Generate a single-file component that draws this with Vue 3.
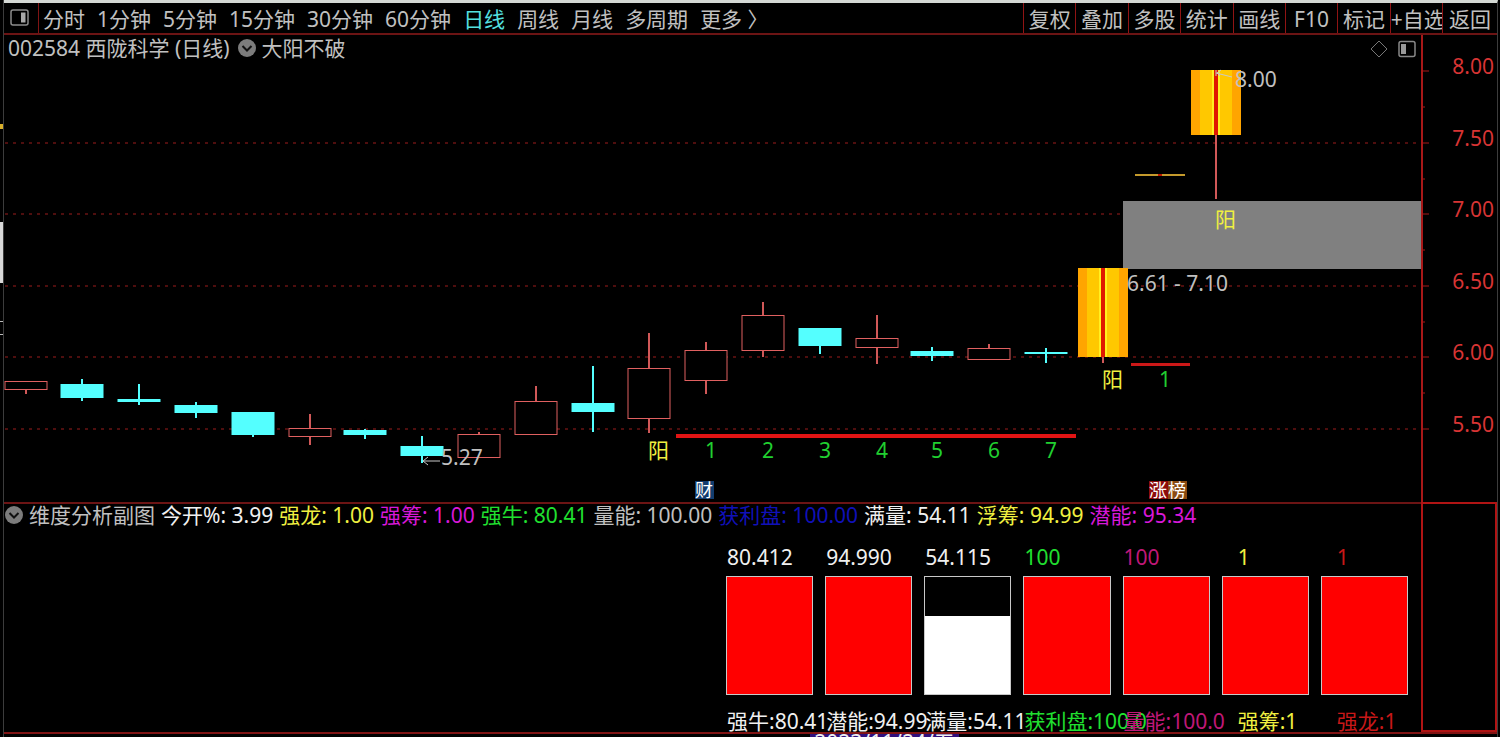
<template>
  <div class="terminal">
    <aside class="edge">
      <i class="edge-mark gold"></i>
      <i class="edge-mark thumb"></i>
      <i class="edge-mark dots"></i>
    </aside>

    <div class="window">
      <header class="toolbar">
        <button class="panel-btn" aria-label="侧栏">
          <svg width="20" height="18" viewBox="0 0 20 18" fill="none">
            <rect x="1" y="1" width="17" height="15" rx="2" stroke="#8c8c8c" stroke-width="1.5" />
            <rect x="11" y="3.5" width="4.5" height="10" fill="#a8a8a8" />
          </svg>
        </button>
        <nav class="periods">
          <button v-for="p in periods" :key="p" :class="{ active: p === current }" @click="current = p">{{ p }}</button>
        </nav>
        <nav class="tools">
          <button v-for="t in tools" :key="t">{{ t }}</button>
        </nav>
      </header>

      <section class="main-chart">
        <div class="chart-title">
          <span>002584 西陇科学 (日线)</span>
          <svg class="chevron" width="20" height="20" viewBox="0 0 20 20">
            <circle cx="10" cy="10" r="9" fill="#7c7c7c" />
            <path d="M5.5 8L10 12.5L14.5 8" fill="none" stroke="#111" stroke-width="2" />
          </svg>
          <span>大阳不破</span>
        </div>

        <svg class="kline" viewBox="4 35 1493 467">
          <!-- 网格与价格轴 -->
          <g v-for="t in majorTicks" :key="t.label">
            <line v-if="t.grid" x1="5" :y1="t.y" x2="1421" :y2="t.y" class="grid" />
            <line x1="1421" :y1="t.y" x2="1429" :y2="t.y" class="axis" />
            <text x="1494" :y="t.y + 3" class="price">{{ t.label }}</text>
          </g>
          <line v-for="y in minorTicks" :key="y" x1="1421" :y1="y" x2="1425" :y2="y" class="axis" />
          <line x1="1422" y1="35" x2="1422" y2="502" class="axis bold" />

          <!-- 缺口区间 -->
          <rect x="1123" y="201" width="298" height="68" fill="#808080" />

          <g v-for="c in candles" :key="c.x">
            <line :x1="c.x" :y1="c.high" :x2="c.x" :y2="c.top" :class="['wick', c.dir]" />
            <line :x1="c.x" :y1="c.bottom" :x2="c.x" :y2="c.low" :class="['wick', c.dir]" />
            <rect v-if="c.dir === 'up'" :x="c.x - 21" :y="c.top + 0.5" width="42" :height="c.bottom - c.top - 1" class="body-up" />
            <rect v-else :x="c.x - 21.5" :y="c.top" width="43" :height="c.bottom - c.top" class="body-down" />
          </g>

          <!-- 大阳线 -->
          <g v-for="b in bigCandles" :key="b.x">
            <rect :x="b.x" :y="b.y" width="50" :height="b.h" fill="#ffa500" />
            <rect :x="b.x + 9" :y="b.y" width="32" :height="b.h" fill="#ffc800" />
            <rect :x="b.x + 21" :y="b.y" width="8" :height="b.h" fill="#fff020" />
            <rect :x="b.x + 23" :y="b.y" width="4" :height="b.h" fill="#e01800" />
            <line :x1="b.x + 25" :y1="b.y + b.h" :x2="b.x + 25" :y2="b.low" class="wick up" />
          </g>
          <rect x="1135" y="174" width="50" height="2" fill="#c49a2c" />
          <rect x="1158" y="174" width="4" height="2" fill="#c01800" />

          <rect x="676" y="434" width="400" height="4" fill="#e01414" />
          <rect x="1131" y="363" width="59" height="3" fill="#cc1818" />

          <text v-for="m in marks" :key="m.x" :x="m.x" :y="m.y" :class="['mark', m.kind]">{{ m.text }}</text>

          <path d="M440 461H423M428 457L423 461L428 465" class="arrow" />
          <text x="441" y="465" class="note">5.27</text>
          <path d="M1216 73L1232 77M1216 70V76M1221 70L1217 73L1220 76" class="arrow" />
          <text x="1235" y="87" class="note">8.00</text>
          <text x="1127" y="291" class="note">6.61 - 7.10</text>

          <g v-for="b in badges" :key="b.text">
            <rect :x="b.x" y="481" width="19" height="18" :fill="b.bg" />
            <text :x="b.x" y="497" class="badge">{{ b.text }}</text>
          </g>

          <path d="M1379 41L1387 49L1379 57L1371 49Z" fill="none" stroke="#777" />
          <rect x="1399" y="41.5" width="16" height="15" rx="2" fill="none" stroke="#888" stroke-width="1.5" />
          <rect x="1401" y="44" width="5" height="10" fill="#999" />
        </svg>
      </section>

      <section class="sub-chart">
        <div class="sub-body">
          <div class="legend">
            <svg class="chevron" width="20" height="20" viewBox="0 0 20 20">
              <circle cx="10" cy="10" r="9" fill="#7c7c7c" />
              <path d="M5.5 8L10 12.5L14.5 8" fill="none" stroke="#111" stroke-width="2" />
            </svg>
            <span class="name">维度分析副图</span>
            <span v-for="l in legend" :key="l.text" :class="l.color">{{ l.text }}</span>
          </div>
          <div class="bars">
            <div v-for="b in bars" :key="b.label" :class="['bar', b.color, { inset: b.inset }]">
              <span class="value">{{ b.value }}</span>
              <div class="box">
                <div class="fill" :class="{ white: b.fill < 100 }" :style="{ height: b.fill + '%' }"></div>
              </div>
              <span class="label">{{ b.label }}</span>
            </div>
          </div>
        </div>
        <div class="side-box"></div>
      </section>

      <footer class="date-row"><span class="date">2023/11/24/五</span></footer>
    </div>
  </div>
</template>

<script setup>
import { ref } from 'vue';

const periods = ['分时', '1分钟', '5分钟', '15分钟', '30分钟', '60分钟', '日线', '周线', '月线', '多周期', '更多 〉'];
const tools = ['复权', '叠加', '多股', '统计', '画线', 'F10', '标记', '+自选', '返回'];
const current = ref('日线');

const majorTicks = [
  { label: '8.00', y: 71 },
  { label: '7.50', y: 143, grid: true },
  { label: '7.00', y: 214, grid: true },
  { label: '6.50', y: 286, grid: true },
  { label: '6.00', y: 357, grid: true },
  { label: '5.50', y: 429, grid: true }
];
const minorTicks = [107, 179, 250, 322, 393];

// x 为中线，top / bottom 为实体上下沿，high / low 为影线端点
const candles = [
  { x: 26, high: 381, top: 381, bottom: 390, low: 394, dir: 'up' },
  { x: 82, high: 379, top: 384, bottom: 398, low: 401, dir: 'down' },
  { x: 139, high: 384, top: 399, bottom: 402, low: 405, dir: 'down' },
  { x: 196, high: 402, top: 405, bottom: 413, low: 418, dir: 'down' },
  { x: 253, high: 412, top: 412, bottom: 435, low: 437, dir: 'down' },
  { x: 310, high: 414, top: 428, bottom: 437, low: 445, dir: 'up' },
  { x: 365, high: 429, top: 430, bottom: 435, low: 439, dir: 'down' },
  { x: 422, high: 436, top: 446, bottom: 456, low: 463, dir: 'down' },
  { x: 479, high: 432, top: 434, bottom: 458, low: 458, dir: 'up' },
  { x: 536, high: 386, top: 401, bottom: 435, low: 435, dir: 'up' },
  { x: 593, high: 366, top: 403, bottom: 412, low: 432, dir: 'down' },
  { x: 649, high: 333, top: 368, bottom: 419, low: 433, dir: 'up' },
  { x: 706, high: 342, top: 350, bottom: 381, low: 394, dir: 'up' },
  { x: 763, high: 302, top: 315, bottom: 351, low: 357, dir: 'up' },
  { x: 820, high: 328, top: 328, bottom: 346, low: 354, dir: 'down' },
  { x: 877, high: 315, top: 338, bottom: 348, low: 364, dir: 'up' },
  { x: 932, high: 347, top: 351, bottom: 356, low: 361, dir: 'down' },
  { x: 989, high: 344, top: 348, bottom: 360, low: 360, dir: 'up' },
  { x: 1046, high: 348, top: 352, bottom: 354, low: 363, dir: 'down' }
];

const bigCandles = [
  { x: 1078, y: 268, h: 89, low: 363 },
  { x: 1191, y: 70, h: 65, low: 199 }
];

const marks = [
  { text: '阳', x: 648, y: 458, kind: 'sun' },
  { text: '1', x: 705, y: 458, kind: 'count' },
  { text: '2', x: 762, y: 458, kind: 'count' },
  { text: '3', x: 819, y: 458, kind: 'count' },
  { text: '4', x: 876, y: 458, kind: 'count' },
  { text: '5', x: 931, y: 458, kind: 'count' },
  { text: '6', x: 988, y: 458, kind: 'count' },
  { text: '7', x: 1045, y: 458, kind: 'count' },
  { text: '阳', x: 1102, y: 387, kind: 'sun' },
  { text: '1', x: 1159, y: 387, kind: 'count' },
  { text: '阳', x: 1215, y: 227, kind: 'sun' }
];

const badges = [
  { text: '财', x: 695, bg: '#123c6e' },
  { text: '涨', x: 1149, bg: '#8c0c0c' },
  { text: '榜', x: 1168, bg: '#8a4a10' }
];

const legend = [
  { text: '今开%: 3.99', color: 'white' },
  { text: '强龙: 1.00', color: 'yellow' },
  { text: '强筹: 1.00', color: 'magenta' },
  { text: '强牛: 80.41', color: 'green' },
  { text: '量能: 100.00', color: 'grey' },
  { text: '获利盘: 100.00', color: 'blue' },
  { text: '满量: 54.11', color: 'white' },
  { text: '浮筹: 94.99', color: 'yellow' },
  { text: '潜能: 95.34', color: 'magenta' }
];

const bars = [
  { value: '80.412', label: '强牛:80.41', fill: 100, color: 'white' },
  { value: '94.990', label: '潜能:94.99', fill: 100, color: 'white' },
  { value: '54.115', label: '满量:54.11', fill: 67, color: 'white' },
  { value: '100', label: '获利盘:100.0', fill: 100, color: 'green' },
  { value: '100', label: '量能:100.0', fill: 100, color: 'pink' },
  { value: '1', label: '强筹:1', fill: 100, color: 'yellow', inset: true },
  { value: '1', label: '强龙:1', fill: 100, color: 'red', inset: true }
];
</script>

<style>
body {
  margin: 0;
  background: #000;
}
</style>

<style scoped>
.terminal {
  display: flex;
  height: 100vh;
  overflow: hidden;
  background: #000;
  color: #c0c0c0;
  font-family: "Noto Sans", "Noto Sans CJK SC", sans-serif;
  font-size: 21px;
  line-height: 26px;
  white-space: nowrap;
}

button {
  padding: 0;
  border: 0;
  background: none;
  color: inherit;
  font: inherit;
  white-space: nowrap;
  cursor: pointer;
}

/* 左侧露出的窗口边缘 */
.edge {
  flex: none;
  display: flex;
  flex-direction: column;
  width: 3px;
  border-right: 1px solid #3c3c3c;
}
.edge-mark { width: 3px; }
.gold { height: 5px; margin-top: 124px; background: #d8b02c; }
.thumb { height: 61px; margin-top: 93px; background: #d8d8d8; }
.dots { height: 12px; margin-top: 38px; border-top: 1px solid #bbb; border-bottom: 1px solid #bbb; }

.window {
  flex: 1;
  min-width: 0;
  display: flex;
  flex-direction: column;
  margin-right: 2px;
  border-top: 3px solid #d4d8d4;
  border-right: 1px solid #3c3c3c;
}

.toolbar {
  display: flex;
  height: 30px;
  border-bottom: 2px solid #6c1414;
}
.panel-btn {
  display: flex;
  align-items: center;
  justify-content: center;
  width: 35px;
  padding-right: 2px;
  border-right: 1px solid #801414;
}
.periods {
  flex: 1;
  display: flex;
  gap: 12px;
  padding-left: 4px;
}
.periods button, .tools button { padding-top: 2px; }
.periods .active { color: #54e0e0; }
.tools {
  display: grid;
  grid-template-columns: repeat(8, 1fr) 55px;
  width: 32%;
  max-width: 474px;
}
.tools button {
  min-width: 0;
  overflow: hidden;
  border-left: 1px solid #901414;
}

.main-chart { position: relative; }
.chart-title {
  position: absolute;
  top: 0;
  left: 4px;
  display: flex;
  align-items: center;
  gap: 5px;
}
.chart-title .chevron { margin-left: 2px; }
.kline {
  display: block;
  width: 100%;
}
.grid { stroke: #9c1c1c; stroke-dasharray: 3 5; }
.axis { stroke: #a81818; }
.bold { stroke-width: 2; }
.price { fill: #d83434; text-anchor: end; }
.wick.up { stroke: #d05858; stroke-width: 2; }
.wick.down { stroke: #54ffff; stroke-width: 2; }
.body-up { fill: #000; stroke: #e06060; }
.body-down { fill: #54ffff; }
.sun { fill: #f0f040; }
.count { fill: #20d030; }
.note { fill: #c0c0c0; }
.arrow { fill: none; stroke: #c8c8c8; }
.badge { fill: #fff; font-size: 18px; }

.sub-chart {
  display: flex;
  flex: 1;
  min-height: 0;
  border-bottom: 2px solid #801414;
}
.sub-body {
  flex: 1;
  min-width: 0;
  border-top: 2px solid #6c1414;
}
.side-box {
  width: 72px;
  border: 2px solid #b01414;
}
.legend {
  display: flex;
  align-items: center;
  gap: 6px;
  height: 22px;
}
.legend .name { margin-left: -1px; }

.bars {
  display: grid;
  grid-template-columns: repeat(7, 1fr);
  gap: 12px;
  width: 682px;
  max-width: 90%;
  margin: 18px 13px 0 auto;
}
.bar {
  display: flex;
  flex-direction: column;
  min-width: 0;
}
.value, .label { padding-left: 1px; }
.inset .value, .inset .label { padding-left: 16px; }
.box {
  display: flex;
  flex-direction: column;
  justify-content: flex-end;
  height: 117px;
  margin: 6px 0 13px;
  border: 1px solid #c8c8c8;
}
.fill { background: #f00; }
.fill.white { background: #fff; }

.white { color: #f0f0f0; }
.yellow { color: #f0f040; }
.magenta { color: #d818d8; }
.green { color: #20e030; }
.grey { color: #c0c0c0; }
.blue { color: #1010b8; }
.pink { color: #c01878; }
.red { color: #c81818; }

.date-row {
  flex: none;
  display: flex;
  height: 3px;
  overflow: hidden;
  padding-left: 54%;
}
.date {
  height: 16px;
  padding: 0 4px;
  background: #30107c;
  color: #f0f0f0;
  line-height: 16px;
}
</style>
